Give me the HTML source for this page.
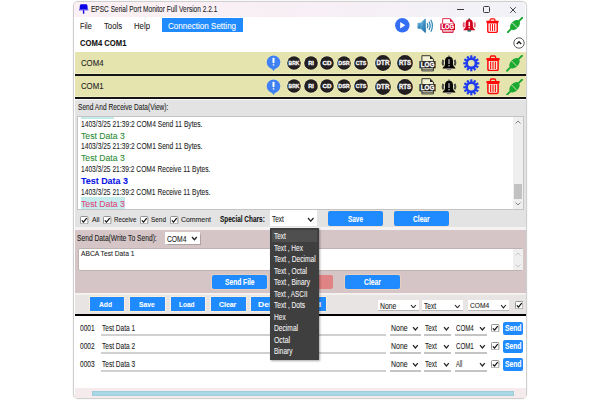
<!DOCTYPE html>
<html><head><meta charset="utf-8"><style>
html,body{margin:0;padding:0;background:#fff;}
body{width:600px;height:400px;position:relative;overflow:hidden;font-family:"Liberation Sans",sans-serif;}
.a{position:absolute;}
.t{line-height:1;white-space:nowrap;transform-origin:0 0;-webkit-text-stroke:0.08px currentColor;}
svg text{font-family:"Liberation Sans",sans-serif;}
</style></head><body>
<div class="a" style="left:72.8px;top:0.6px;width:454px;height:398.6px;border:1.6px solid #cfcfcf;border-radius:5px;background:#fff;box-shadow:0 0 1.5px rgba(0,0,0,.12);box-sizing:border-box;overflow:hidden"></div>
<div class="a" style="left:74.4px;top:2.2px;width:450.8px;height:15px;background:linear-gradient(90deg,#fbf0f3,#f8eff5 45%,#f1f2f7);border-radius:4px 4px 0 0"></div>
<svg class="a" style="left:78px;top:3px" width="12" height="12" viewBox="0 0 12 12">
<path d="M3 1.3 H8.3 Q9.3 1.3 9.5 3 L9.7 6.2 H1.6 L1.8 3 Q2 1.3 3 1.3 Z" fill="#0c00e6"/>
<rect x="1" y="6.3" width="9.3" height="1" fill="#2a20f0"/>
<rect x="4.9" y="7.3" width="1.4" height="3.5" rx="0.5" fill="#0c00e6"/>
</svg>
<div class="a t" style="left:91px;top:5.34px;font-size:9.04px;color:#1a1a1a;transform:scaleX(0.725);">EPSC Serial Port Monitor Full Version 2.2.1</div>
<div class="a" style="left:457px;top:8.6px;width:6.5px;height:0.9px;background:#3a3a3a"></div>
<div class="a" style="left:483px;top:6.3px;width:6.6px;height:6.4px;border:0.95px solid #3a3a3a;border-radius:1.5px;box-sizing:border-box"></div>
<svg class="a" style="left:509px;top:5.5px" width="8" height="8" viewBox="0 0 8 8"><path d="M1.2 1.2L6.8 6.8M6.8 1.2L1.2 6.8" stroke="#3a3a3a" stroke-width="0.95"/></svg>
<div class="a t" style="left:80.3px;top:22.00px;font-size:8.74px;color:#222;transform:scaleX(0.831);">File</div>
<div class="a t" style="left:104px;top:22.00px;font-size:8.74px;color:#222;transform:scaleX(0.882);">Tools</div>
<div class="a t" style="left:133.6px;top:22.00px;font-size:8.74px;color:#222;transform:scaleX(0.890);">Help</div>
<div class="a" style="left:162px;top:18.3px;width:80.8px;height:14.2px;background:#1f8bff"></div>
<div class="a t" style="left:167.5px;top:22.17px;font-size:8.89px;color:#fff;transform:scaleX(0.908);">Connection Setting</div>
<svg class="a" style="left:395.2px;top:18.3px" width="15" height="15" viewBox="0 0 15 15"><circle cx="7.3" cy="7.3" r="7.2" fill="#336ef4"/><path d="M5.2 4 L10.3 7.2 L5.2 10.4 Z" fill="#fff"/></svg>
<svg class="a" style="left:417px;top:17.8px" width="17" height="15.5" viewBox="0 0 17 15.5">
<defs><linearGradient id="sg" x1="0" y1="0" x2="1" y2="1"><stop offset="0" stop-color="#8cc6e6"/><stop offset="0.5" stop-color="#3d93c6"/><stop offset="1" stop-color="#1a6497"/></linearGradient></defs>
<rect x="0.4" y="4.8" width="3.8" height="5.9" rx="0.8" fill="url(#sg)"/>
<path d="M3.4 5 L8 0.8 Q8.8 0.3 8.8 1.3 V14.2 Q8.8 15.2 8 14.7 L3.4 10.5 Z" fill="url(#sg)"/>
<path d="M10.2 5.3 Q11.5 7.75 10.2 10.2" stroke="#2f86bb" stroke-width="1.3" fill="none"/>
<path d="M12 3.5 Q14.3 7.75 12 12" stroke="#2f86bb" stroke-width="1.2" fill="none"/>
<path d="M13.8 1.8 Q17 7.75 13.8 13.7" stroke="#2f86bb" stroke-width="1.2" fill="none"/>
</svg>
<svg class="a" style="left:439.8px;top:17.6px" width="15.5" height="15.5" viewBox="0 0 17 17">
<path d="M2.9 0.7 H11 L14.4 4 V15.9 H2.9 Z" fill="#fff" stroke="#d4002a" stroke-width="0.9"/>
<path d="M11 0.7 L14.4 4 H11 Z" fill="#d4002a"/>
<path d="M2.9 14.5 H14.4" stroke="#d4002a" stroke-width="0.6"/>
<rect x="0.4" y="6.1" width="16.2" height="7.2" fill="#d4002a"/>
<text x="8.5" y="12.4" font-weight="bold" font-size="6.9" fill="#fff" stroke="#fff" stroke-width="0.3" text-anchor="middle" textLength="13.6" lengthAdjust="spacingAndGlyphs">LOG</text>
</svg>
<svg class="a" style="left:462.3px;top:18.3px" width="14.5" height="14.5" viewBox="0 0 16 16">
<circle cx="8" cy="1.3" r="1.1" fill="#2f6f68"/>
<path d="M8 1.7 C4.6 1.7 4 3.9 4 6.6 V9.3 C4 10.9 2.7 11.8 1.6 12.9 V13.4 H14.4 V12.9 C13.3 11.8 12 10.9 12 9.3 V6.6 C12 3.9 11.4 1.7 8 1.7 Z" fill="#d2001c"/>
<ellipse cx="8" cy="14.2" rx="2.3" ry="1.1" fill="#2f6f68"/>
<rect x="7.2" y="4.2" width="1.6" height="4.8" fill="#fff"/><rect x="7.2" y="10" width="1.6" height="1.4" fill="#fff"/>
<path d="M2.3 4.9 Q1.2 7.6 2.3 10.3 M13.7 4.9 Q14.8 7.6 13.7 10.3" stroke="#e6687a" stroke-width="2.1" fill="none"/>
</svg>
<svg class="a" style="left:485.8px;top:17.9px" width="13" height="15.3" viewBox="0 0 14 16">
<path d="M4.4 3 V1.7 Q4.4 0.7 5.4 0.7 H8.6 Q9.6 0.7 9.6 1.7 V3" stroke="#ff0a0a" stroke-width="1.3" fill="none"/>
<rect x="0.3" y="2.8" width="13.4" height="2.1" rx="0.7" fill="#ff0a0a"/>
<path d="M1.9 4.9 H12.1 V13.8 Q12.1 15.3 10.6 15.3 H3.4 Q1.9 15.3 1.9 13.8 Z" stroke="#ff0a0a" stroke-width="1.5" fill="#fff"/>
<rect x="4.1" y="6.3" width="1.1" height="7.4" fill="#ff0a0a"/><rect x="6.45" y="6.3" width="1.1" height="7.4" fill="#ff0a0a"/><rect x="8.8" y="6.3" width="1.1" height="7.4" fill="#ff0a0a"/>
</svg>
<svg class="a" style="left:506.8px;top:17.4px" width="16" height="16" viewBox="0 0 17 17">
<path d="M0.8 16.2 L4.6 12.4 M12.4 4.6 L16.2 0.8" stroke="#1aaa32" stroke-width="1.9" stroke-linecap="round"/>
<ellipse cx="8.5" cy="8.5" rx="6.3" ry="4.1" transform="rotate(-45 8.5 8.5)" fill="#1aaa32"/>
<path d="M5.6 6.2 L10.8 11.4" stroke="#fff" stroke-width="0.9"/>
</svg>
<div class="a t" style="left:80.3px;top:38.33px;font-size:9.65px;color:#111;font-weight:bold;transform:scaleX(0.798);">COM4 COM1</div>
<svg class="a" style="left:513.1px;top:37px" width="12" height="12" viewBox="0 0 12 12"><circle cx="6" cy="6" r="5.2" stroke="#4a4a4a" stroke-width="0.9" fill="#fff"/><path d="M3.8 7 L6 4.8 L8.2 7" stroke="#222" stroke-width="1.4" fill="none"/></svg>
<div class="a" style="left:74.5px;top:52px;width:451px;height:22.2px;background:#e5e3ae"></div>
<div class="a" style="left:74.5px;top:73.2px;width:451px;height:1px;background:#efedc4"></div>
<div class="a" style="left:74.5px;top:74.2px;width:451px;height:1.7px;background:#141414"></div>
<div class="a t" style="left:80.8px;top:58.94px;font-size:9.04px;color:#222;transform:scaleX(0.861);">COM4</div>
<svg class="a" style="left:265.6px;top:55.2px" width="15" height="17" viewBox="0 0 15 17">
<circle cx="7.5" cy="7.2" r="7.4" fill="#f2efc0" opacity="0.6"/>
<circle cx="7.5" cy="7.2" r="6.8" fill="#3f80f2"/><path d="M5 12.5 L7.5 15.9 L10 12.5Z" fill="#3f80f2"/>
<rect x="6.5" y="2.8" width="2" height="5.5" rx="0.7" fill="#fff"/><rect x="6.6" y="9.2" width="1.8" height="1.4" rx="0.5" fill="#fff"/></svg>
<svg class="a" style="left:285.8px;top:54.6px" width="16" height="16" viewBox="0 0 16 16"><circle cx="8" cy="8" r="7.6" fill="#f4f1c4"/><circle cx="8" cy="8" r="6.8" fill="#231f20"/>
<text x="8" y="10.1" font-weight="bold" font-size="5.9" fill="#f4f4f4" stroke="#f4f4f4" stroke-width="0.35" text-anchor="middle" textLength="10.8" lengthAdjust="spacingAndGlyphs">BRK</text></svg>
<svg class="a" style="left:302.6px;top:54.6px" width="16" height="16" viewBox="0 0 16 16"><circle cx="8" cy="8" r="7.6" fill="#f4f1c4"/><circle cx="8" cy="8" r="6.8" fill="#231f20"/>
<text x="8" y="10.1" font-weight="bold" font-size="5.9" fill="#f4f4f4" stroke="#f4f4f4" stroke-width="0.35" text-anchor="middle" textLength="5.6" lengthAdjust="spacingAndGlyphs">RI</text></svg>
<svg class="a" style="left:319.3px;top:54.6px" width="16" height="16" viewBox="0 0 16 16"><circle cx="8" cy="8" r="7.6" fill="#f4f1c4"/><circle cx="8" cy="8" r="6.8" fill="#231f20"/>
<text x="8" y="10.1" font-weight="bold" font-size="5.9" fill="#f4f4f4" stroke="#f4f4f4" stroke-width="0.35" text-anchor="middle" textLength="9" lengthAdjust="spacingAndGlyphs">CD</text></svg>
<svg class="a" style="left:335.9px;top:54.6px" width="16" height="16" viewBox="0 0 16 16"><circle cx="8" cy="8" r="7.6" fill="#f4f1c4"/><circle cx="8" cy="8" r="6.8" fill="#231f20"/>
<text x="8" y="10.1" font-weight="bold" font-size="5.9" fill="#f4f4f4" stroke="#f4f4f4" stroke-width="0.35" text-anchor="middle" textLength="11.4" lengthAdjust="spacingAndGlyphs">DSR</text></svg>
<svg class="a" style="left:352.6px;top:54.6px" width="16" height="16" viewBox="0 0 16 16"><circle cx="8" cy="8" r="7.6" fill="#f4f1c4"/><circle cx="8" cy="8" r="6.8" fill="#231f20"/>
<text x="8" y="10.1" font-weight="bold" font-size="5.9" fill="#f4f4f4" stroke="#f4f4f4" stroke-width="0.35" text-anchor="middle" textLength="10.6" lengthAdjust="spacingAndGlyphs">CTS</text></svg>
<svg class="a" style="left:374.3px;top:54.0px" width="18" height="18" viewBox="0 0 18 18"><circle cx="9" cy="9" r="8.6" fill="#f4f1c4"/><circle cx="9" cy="9" r="7.9" fill="#231f20"/>
<text x="9" y="11.1" font-weight="bold" font-size="6.9" fill="#f4f4f4" stroke="#f4f4f4" stroke-width="0.4" text-anchor="middle" textLength="12.8" lengthAdjust="spacingAndGlyphs">DTR</text></svg>
<svg class="a" style="left:396.1px;top:54.0px" width="18" height="18" viewBox="0 0 18 18"><circle cx="9" cy="9" r="8.6" fill="#f4f1c4"/><circle cx="9" cy="9" r="7.9" fill="#231f20"/>
<text x="9" y="11.1" font-weight="bold" font-size="6.9" fill="#f4f4f4" stroke="#f4f4f4" stroke-width="0.4" text-anchor="middle" textLength="12.2" lengthAdjust="spacingAndGlyphs">RTS</text></svg>
<svg class="a" style="left:418.5px;top:54.5px" width="17" height="17" viewBox="0 0 17 17">
<path d="M2.9 0.7 H11 L14.4 4 V15.9 H2.9 Z" fill="#f1f0d2" stroke="#222" stroke-width="0.9"/>
<path d="M11 0.7 L14.4 4 H11 Z" fill="#222"/>
<path d="M2.9 14.5 H14.4" stroke="#222" stroke-width="0.6"/>
<rect x="0.4" y="6.1" width="16.2" height="7.2" fill="#222"/>
<text x="8.5" y="12.4" font-weight="bold" font-size="6.9" fill="#fff" stroke="#fff" stroke-width="0.3" text-anchor="middle" textLength="13.6" lengthAdjust="spacingAndGlyphs">LOG</text>
</svg>
<svg class="a" style="left:441px;top:55.0px" width="16" height="16" viewBox="0 0 16 16">
<circle cx="8" cy="1.3" r="1.1" fill="#888"/>
<path d="M8 1.7 C4.6 1.7 4 3.9 4 6.6 V9.3 C4 10.9 2.7 11.8 1.6 12.9 V13.4 H14.4 V12.9 C13.3 11.8 12 10.9 12 9.3 V6.6 C12 3.9 11.4 1.7 8 1.7 Z" fill="#050505"/>
<ellipse cx="8" cy="14.2" rx="2.3" ry="1.1" fill="#888"/>
<rect x="7.2" y="4.2" width="1.6" height="4.8" fill="#9a9a9a"/><rect x="7.2" y="10" width="1.6" height="1.4" fill="#9a9a9a"/>
<path d="M2.3 4.9 Q1.2 7.6 2.3 10.3 M13.7 4.9 Q14.8 7.6 13.7 10.3" stroke="#4a4a4a" stroke-width="2.1" fill="none"/>
</svg>
<svg class="a" style="left:462.5px;top:55.0px" width="17" height="17" viewBox="0 0 17 17">
<g fill="#1f3cf0" transform="translate(8.3 8.3)"><rect x="-1.1" y="-8" width="2.2" height="3.4" transform="rotate(0)"/><rect x="-1.1" y="-8" width="2.2" height="3.4" transform="rotate(30)"/><rect x="-1.1" y="-8" width="2.2" height="3.4" transform="rotate(60)"/><rect x="-1.1" y="-8" width="2.2" height="3.4" transform="rotate(90)"/><rect x="-1.1" y="-8" width="2.2" height="3.4" transform="rotate(120)"/><rect x="-1.1" y="-8" width="2.2" height="3.4" transform="rotate(150)"/><rect x="-1.1" y="-8" width="2.2" height="3.4" transform="rotate(180)"/><rect x="-1.1" y="-8" width="2.2" height="3.4" transform="rotate(210)"/><rect x="-1.1" y="-8" width="2.2" height="3.4" transform="rotate(240)"/><rect x="-1.1" y="-8" width="2.2" height="3.4" transform="rotate(270)"/><rect x="-1.1" y="-8" width="2.2" height="3.4" transform="rotate(300)"/><rect x="-1.1" y="-8" width="2.2" height="3.4" transform="rotate(330)"/>
<circle r="4.6" fill="none" stroke="#1f3cf0" stroke-width="2.6"/></g></svg>
<svg class="a" style="left:485.8px;top:54.6px" width="14" height="16.6" viewBox="0 0 14 16">
<path d="M4.4 3 V1.7 Q4.4 0.7 5.4 0.7 H8.6 Q9.6 0.7 9.6 1.7 V3" stroke="#ff0a0a" stroke-width="1.3" fill="none"/>
<rect x="0.3" y="2.8" width="13.4" height="2.1" rx="0.7" fill="#ff0a0a"/>
<path d="M1.9 4.9 H12.1 V13.8 Q12.1 15.3 10.6 15.3 H3.4 Q1.9 15.3 1.9 13.8 Z" stroke="#ff0a0a" stroke-width="1.5" fill="#f4ecd6"/>
<rect x="4.1" y="6.3" width="1.1" height="7.4" fill="#ff0a0a"/><rect x="6.45" y="6.3" width="1.1" height="7.4" fill="#ff0a0a"/><rect x="8.8" y="6.3" width="1.1" height="7.4" fill="#ff0a0a"/>
</svg>
<svg class="a" style="left:505.8px;top:55.0px" width="17" height="16.5" viewBox="0 0 17 17">
<path d="M0.8 16.2 L4.6 12.4 M12.4 4.6 L16.2 0.8" stroke="#1aaa32" stroke-width="1.9" stroke-linecap="round"/>
<ellipse cx="8.5" cy="8.5" rx="6.3" ry="4.1" transform="rotate(-45 8.5 8.5)" fill="#1aaa32"/>
<path d="M5.6 6.2 L10.8 11.4" stroke="#e5e3ae" stroke-width="0.9"/>
</svg>
<div class="a" style="left:74.5px;top:75.8px;width:451px;height:21.5px;background:#e5e3ae"></div>
<div class="a" style="left:74.5px;top:96.3px;width:451px;height:1px;background:#efedc4"></div>
<div class="a" style="left:74.5px;top:97.3px;width:451px;height:1.7px;background:#141414"></div>
<div class="a t" style="left:80.8px;top:82.44px;font-size:9.04px;color:#222;transform:scaleX(0.861);">COM1</div>
<svg class="a" style="left:265.6px;top:78.7px" width="15" height="17" viewBox="0 0 15 17">
<circle cx="7.5" cy="7.2" r="7.4" fill="#f2efc0" opacity="0.6"/>
<circle cx="7.5" cy="7.2" r="6.8" fill="#3f80f2"/><path d="M5 12.5 L7.5 15.9 L10 12.5Z" fill="#3f80f2"/>
<rect x="6.5" y="2.8" width="2" height="5.5" rx="0.7" fill="#fff"/><rect x="6.6" y="9.2" width="1.8" height="1.4" rx="0.5" fill="#fff"/></svg>
<svg class="a" style="left:285.8px;top:78.1px" width="16" height="16" viewBox="0 0 16 16"><circle cx="8" cy="8" r="7.6" fill="#f4f1c4"/><circle cx="8" cy="8" r="6.8" fill="#231f20"/>
<text x="8" y="10.1" font-weight="bold" font-size="5.9" fill="#f4f4f4" stroke="#f4f4f4" stroke-width="0.35" text-anchor="middle" textLength="10.8" lengthAdjust="spacingAndGlyphs">BRK</text></svg>
<svg class="a" style="left:302.6px;top:78.1px" width="16" height="16" viewBox="0 0 16 16"><circle cx="8" cy="8" r="7.6" fill="#f4f1c4"/><circle cx="8" cy="8" r="6.8" fill="#231f20"/>
<text x="8" y="10.1" font-weight="bold" font-size="5.9" fill="#f4f4f4" stroke="#f4f4f4" stroke-width="0.35" text-anchor="middle" textLength="5.6" lengthAdjust="spacingAndGlyphs">RI</text></svg>
<svg class="a" style="left:319.3px;top:78.1px" width="16" height="16" viewBox="0 0 16 16"><circle cx="8" cy="8" r="7.6" fill="#f4f1c4"/><circle cx="8" cy="8" r="6.8" fill="#231f20"/>
<text x="8" y="10.1" font-weight="bold" font-size="5.9" fill="#f4f4f4" stroke="#f4f4f4" stroke-width="0.35" text-anchor="middle" textLength="9" lengthAdjust="spacingAndGlyphs">CD</text></svg>
<svg class="a" style="left:335.9px;top:78.1px" width="16" height="16" viewBox="0 0 16 16"><circle cx="8" cy="8" r="7.6" fill="#f4f1c4"/><circle cx="8" cy="8" r="6.8" fill="#231f20"/>
<text x="8" y="10.1" font-weight="bold" font-size="5.9" fill="#f4f4f4" stroke="#f4f4f4" stroke-width="0.35" text-anchor="middle" textLength="11.4" lengthAdjust="spacingAndGlyphs">DSR</text></svg>
<svg class="a" style="left:352.6px;top:78.1px" width="16" height="16" viewBox="0 0 16 16"><circle cx="8" cy="8" r="7.6" fill="#f4f1c4"/><circle cx="8" cy="8" r="6.8" fill="#231f20"/>
<text x="8" y="10.1" font-weight="bold" font-size="5.9" fill="#f4f4f4" stroke="#f4f4f4" stroke-width="0.35" text-anchor="middle" textLength="10.6" lengthAdjust="spacingAndGlyphs">CTS</text></svg>
<svg class="a" style="left:374.3px;top:77.5px" width="18" height="18" viewBox="0 0 18 18"><circle cx="9" cy="9" r="8.6" fill="#f4f1c4"/><circle cx="9" cy="9" r="7.9" fill="#231f20"/>
<text x="9" y="11.1" font-weight="bold" font-size="6.9" fill="#f4f4f4" stroke="#f4f4f4" stroke-width="0.4" text-anchor="middle" textLength="12.8" lengthAdjust="spacingAndGlyphs">DTR</text></svg>
<svg class="a" style="left:396.1px;top:77.5px" width="18" height="18" viewBox="0 0 18 18"><circle cx="9" cy="9" r="8.6" fill="#f4f1c4"/><circle cx="9" cy="9" r="7.9" fill="#231f20"/>
<text x="9" y="11.1" font-weight="bold" font-size="6.9" fill="#f4f4f4" stroke="#f4f4f4" stroke-width="0.4" text-anchor="middle" textLength="12.2" lengthAdjust="spacingAndGlyphs">RTS</text></svg>
<svg class="a" style="left:418.5px;top:78px" width="17" height="17" viewBox="0 0 17 17">
<path d="M2.9 0.7 H11 L14.4 4 V15.9 H2.9 Z" fill="#f1f0d2" stroke="#222" stroke-width="0.9"/>
<path d="M11 0.7 L14.4 4 H11 Z" fill="#222"/>
<path d="M2.9 14.5 H14.4" stroke="#222" stroke-width="0.6"/>
<rect x="0.4" y="6.1" width="16.2" height="7.2" fill="#222"/>
<text x="8.5" y="12.4" font-weight="bold" font-size="6.9" fill="#fff" stroke="#fff" stroke-width="0.3" text-anchor="middle" textLength="13.6" lengthAdjust="spacingAndGlyphs">LOG</text>
</svg>
<svg class="a" style="left:441px;top:78.5px" width="16" height="16" viewBox="0 0 16 16">
<circle cx="8" cy="1.3" r="1.1" fill="#888"/>
<path d="M8 1.7 C4.6 1.7 4 3.9 4 6.6 V9.3 C4 10.9 2.7 11.8 1.6 12.9 V13.4 H14.4 V12.9 C13.3 11.8 12 10.9 12 9.3 V6.6 C12 3.9 11.4 1.7 8 1.7 Z" fill="#050505"/>
<ellipse cx="8" cy="14.2" rx="2.3" ry="1.1" fill="#888"/>
<rect x="7.2" y="4.2" width="1.6" height="4.8" fill="#9a9a9a"/><rect x="7.2" y="10" width="1.6" height="1.4" fill="#9a9a9a"/>
<path d="M2.3 4.9 Q1.2 7.6 2.3 10.3 M13.7 4.9 Q14.8 7.6 13.7 10.3" stroke="#4a4a4a" stroke-width="2.1" fill="none"/>
</svg>
<svg class="a" style="left:462.5px;top:78.5px" width="17" height="17" viewBox="0 0 17 17">
<g fill="#1f3cf0" transform="translate(8.3 8.3)"><rect x="-1.1" y="-8" width="2.2" height="3.4" transform="rotate(0)"/><rect x="-1.1" y="-8" width="2.2" height="3.4" transform="rotate(30)"/><rect x="-1.1" y="-8" width="2.2" height="3.4" transform="rotate(60)"/><rect x="-1.1" y="-8" width="2.2" height="3.4" transform="rotate(90)"/><rect x="-1.1" y="-8" width="2.2" height="3.4" transform="rotate(120)"/><rect x="-1.1" y="-8" width="2.2" height="3.4" transform="rotate(150)"/><rect x="-1.1" y="-8" width="2.2" height="3.4" transform="rotate(180)"/><rect x="-1.1" y="-8" width="2.2" height="3.4" transform="rotate(210)"/><rect x="-1.1" y="-8" width="2.2" height="3.4" transform="rotate(240)"/><rect x="-1.1" y="-8" width="2.2" height="3.4" transform="rotate(270)"/><rect x="-1.1" y="-8" width="2.2" height="3.4" transform="rotate(300)"/><rect x="-1.1" y="-8" width="2.2" height="3.4" transform="rotate(330)"/>
<circle r="4.6" fill="none" stroke="#1f3cf0" stroke-width="2.6"/></g></svg>
<svg class="a" style="left:485.8px;top:78.1px" width="14" height="16.6" viewBox="0 0 14 16">
<path d="M4.4 3 V1.7 Q4.4 0.7 5.4 0.7 H8.6 Q9.6 0.7 9.6 1.7 V3" stroke="#ff0a0a" stroke-width="1.3" fill="none"/>
<rect x="0.3" y="2.8" width="13.4" height="2.1" rx="0.7" fill="#ff0a0a"/>
<path d="M1.9 4.9 H12.1 V13.8 Q12.1 15.3 10.6 15.3 H3.4 Q1.9 15.3 1.9 13.8 Z" stroke="#ff0a0a" stroke-width="1.5" fill="#f4ecd6"/>
<rect x="4.1" y="6.3" width="1.1" height="7.4" fill="#ff0a0a"/><rect x="6.45" y="6.3" width="1.1" height="7.4" fill="#ff0a0a"/><rect x="8.8" y="6.3" width="1.1" height="7.4" fill="#ff0a0a"/>
</svg>
<svg class="a" style="left:505.8px;top:78.5px" width="17" height="16.5" viewBox="0 0 17 17">
<path d="M0.8 16.2 L4.6 12.4 M12.4 4.6 L16.2 0.8" stroke="#1aaa32" stroke-width="1.9" stroke-linecap="round"/>
<ellipse cx="8.5" cy="8.5" rx="6.3" ry="4.1" transform="rotate(-45 8.5 8.5)" fill="#1aaa32"/>
<path d="M5.6 6.2 L10.8 11.4" stroke="#e5e3ae" stroke-width="0.9"/>
</svg>
<div class="a" style="left:74.5px;top:98.7px;width:451px;height:1.3px;background:#fafafa"></div>
<div class="a" style="left:74.5px;top:100px;width:451px;height:127px;background:#e3e3e3"></div>
<div class="a" style="left:74.5px;top:227px;width:451px;height:2.5px;background:#f4f2f2"></div>
<div class="a t" style="left:77.5px;top:102.98px;font-size:8.29px;color:#222;transform:scaleX(0.796);">Send And Receive Data(View):</div>
<div class="a" style="left:77px;top:116px;width:446.5px;height:93.5px;background:#fff;border:1px solid #c4c4c4;box-sizing:border-box"></div>
<div class="a" style="left:80.8px;top:117px;width:33.2px;height:2px;background:#c2ebea"></div>
<div class="a" style="left:513px;top:117px;width:9.5px;height:91.5px;background:#efefef"></div>
<div class="a" style="left:513.5px;top:184px;width:8.5px;height:15px;background:#c2c2c2"></div>
<svg class="a" style="left:514px;top:119px" width="8" height="6" viewBox="0 0 8 6"><path d="M1.5 4.5 L4 2 L6.5 4.5" stroke="#777" stroke-width="0.9" fill="none"/></svg>
<svg class="a" style="left:514px;top:201px" width="8" height="6" viewBox="0 0 8 6"><path d="M1.5 1.5 L4 4 L6.5 1.5" stroke="#777" stroke-width="0.9" fill="none"/></svg>
<div class="a" style="left:80.8px;top:197px;width:44.6px;height:11.8px;background:#c4ecec"></div>
<div class="a t" style="left:81px;top:120.40px;font-size:8.74px;color:#222;transform:scaleX(0.763);">1403/3/25 21:39:2 COM4 Send 11 Bytes.</div>
<div class="a t" style="left:81px;top:142.40px;font-size:8.74px;color:#222;transform:scaleX(0.763);">1403/3/25 21:39:2 COM1 Send 11 Bytes.</div>
<div class="a t" style="left:81px;top:165.20px;font-size:8.74px;color:#222;transform:scaleX(0.760);">1403/3/25 21:39:2 COM4 Receive 11 Bytes.</div>
<div class="a t" style="left:81px;top:187.80px;font-size:8.74px;color:#222;transform:scaleX(0.760);">1403/3/25 21:39:2 COM1 Receive 11 Bytes.</div>
<div class="a t" style="left:81px;top:130.99px;font-size:9.70px;color:#2a8c32;transform:scaleX(0.892);">Test Data 3</div>
<div class="a t" style="left:81px;top:153.49px;font-size:9.70px;color:#2a8c32;transform:scaleX(0.892);">Test Data 3</div>
<div class="a t" style="left:81px;top:177.13px;font-size:9.30px;color:#0a14e6;font-weight:bold;transform:scaleX(0.958);">Test Data 3</div>
<div class="a t" style="left:81px;top:199.09px;font-size:9.70px;color:#e0457e;transform:scaleX(0.895);">Test Data 3</div>
<svg class="a" style="left:80.3px;top:215.8px" width="8.4" height="8.4" viewBox="0 0 10 10"><rect x="0.6" y="0.6" width="8.8" height="8.8" rx="1.2" fill="#fff" stroke="#8a8a8a" stroke-width="1.1"/><path d="M2.2 5.2 L4.2 7.3 L8 2.6" stroke="#111" stroke-width="1.5" fill="none"/></svg>
<div class="a t" style="left:91.5px;top:216.24px;font-size:7.99px;color:#222;transform:scaleX(0.856);">All</div>
<svg class="a" style="left:103.2px;top:215.8px" width="8.4" height="8.4" viewBox="0 0 10 10"><rect x="0.6" y="0.6" width="8.8" height="8.8" rx="1.2" fill="#fff" stroke="#8a8a8a" stroke-width="1.1"/><path d="M2.2 5.2 L4.2 7.3 L8 2.6" stroke="#111" stroke-width="1.5" fill="none"/></svg>
<div class="a t" style="left:113.8px;top:216.24px;font-size:7.99px;color:#222;transform:scaleX(0.776);">Receive</div>
<svg class="a" style="left:140.2px;top:215.8px" width="8.4" height="8.4" viewBox="0 0 10 10"><rect x="0.6" y="0.6" width="8.8" height="8.8" rx="1.2" fill="#fff" stroke="#8a8a8a" stroke-width="1.1"/><path d="M2.2 5.2 L4.2 7.3 L8 2.6" stroke="#111" stroke-width="1.5" fill="none"/></svg>
<div class="a t" style="left:151px;top:216.24px;font-size:7.99px;color:#222;transform:scaleX(0.804);">Send</div>
<svg class="a" style="left:170.2px;top:215.8px" width="8.4" height="8.4" viewBox="0 0 10 10"><rect x="0.6" y="0.6" width="8.8" height="8.8" rx="1.2" fill="#fff" stroke="#8a8a8a" stroke-width="1.1"/><path d="M2.2 5.2 L4.2 7.3 L8 2.6" stroke="#111" stroke-width="1.5" fill="none"/></svg>
<div class="a t" style="left:180.7px;top:216.24px;font-size:7.99px;color:#222;transform:scaleX(0.866);">Comment</div>
<div class="a t" style="left:219.7px;top:214.52px;font-size:9.19px;color:#111;font-weight:bold;transform:scaleX(0.703);">Special Chars:</div>
<div class="a" style="left:270px;top:210.2px;width:46.5px;height:16px;background:#fff"></div>
<div class="a t" style="left:272px;top:215.28px;font-size:8.29px;color:#222;transform:scaleX(0.783);">Text</div>
<svg class="a" style="left:306.7px;top:217.3px" width="7.5" height="5.2" viewBox="0 0 7.5 5.2"><path d="M1 1 L3.75 4.2 L6.5 1" stroke="#222" stroke-width="1.2" fill="none"/></svg>
<div class="a" style="left:327.5px;top:211px;width:55.5px;height:14.5px;background:#1f8bff;border-radius:2px;box-shadow:0 0 0 1px #f2e0d0"></div>
<div class="a t" style="left:347.5px;top:214.93px;font-size:8.59px;color:#fff;font-weight:bold;transform:scaleX(0.748);">Save</div>
<div class="a" style="left:393.8px;top:211px;width:55.5px;height:14.5px;background:#1f8bff;border-radius:2px;box-shadow:0 0 0 1px #f2e0d0"></div>
<div class="a t" style="left:413px;top:214.93px;font-size:8.59px;color:#fff;font-weight:bold;transform:scaleX(0.777);">Clear</div>
<div class="a" style="left:74.5px;top:229.5px;width:451px;height:63.5px;background:#d5c5c6"></div>
<div class="a" style="left:74.5px;top:293px;width:451px;height:1.5px;background:#f6f1f1"></div>
<div class="a t" style="left:77.2px;top:233.98px;font-size:8.29px;color:#222;transform:scaleX(0.808);">Send Data(Write To Send):</div>
<div class="a" style="left:165px;top:232.2px;width:35px;height:11.8px;background:#fff;box-shadow:0.5px 0.8px 1px rgba(0,0,0,.18)"></div>
<div class="a t" style="left:167px;top:234.98px;font-size:8.29px;color:#222;transform:scaleX(0.814);">COM4</div>
<svg class="a" style="left:191px;top:236.2px" width="6.8" height="4.8" viewBox="0 0 6.8 4.8"><path d="M1 1 L3.4 3.8 L5.8 1" stroke="#222" stroke-width="1.3" fill="none"/></svg>
<div class="a" style="left:77.5px;top:247.5px;width:445.5px;height:23px;background:#fff;border-radius:2px;border:1px solid #bdb3b3;box-sizing:border-box"></div>
<div class="a t" style="left:80.5px;top:249.66px;font-size:7.84px;color:#222;transform:scaleX(0.855);">ABCA Test Data 1</div>
<div class="a" style="left:513px;top:248.5px;width:9.5px;height:21px;background:#efefef"></div>
<svg class="a" style="left:514px;top:251px" width="8" height="6" viewBox="0 0 8 6"><path d="M1.5 4.5 L4 2 L6.5 4.5" stroke="#bbb" stroke-width="0.8" fill="none"/></svg>
<svg class="a" style="left:514px;top:262.5px" width="8" height="6" viewBox="0 0 8 6"><path d="M1.5 1.5 L4 4 L6.5 1.5" stroke="#bbb" stroke-width="0.8" fill="none"/></svg>
<div class="a" style="left:212.3px;top:274.9px;width:55px;height:14.4px;background:#1f8bff;border-radius:2px;box-shadow:0 0 0 1px #e6cfc0"></div>
<div class="a t" style="left:225px;top:278.38px;font-size:8.29px;color:#fff;font-weight:bold;transform:scaleX(0.803);">Send File</div>
<div class="a" style="left:278px;top:275px;width:55.3px;height:14.3px;background:#e08384;border-radius:2px;"></div>
<div class="a" style="left:345px;top:275px;width:54.5px;height:14.3px;background:#1f8bff;border-radius:2px;box-shadow:0 0 0 1px #e6cfc0"></div>
<div class="a t" style="left:364px;top:278.40px;font-size:8.74px;color:#fff;font-weight:bold;transform:scaleX(0.777);">Clear</div>
<div class="a" style="left:74.5px;top:294.5px;width:451px;height:19.5px;background:#e9e4e4"></div>
<div class="a" style="left:74.5px;top:314px;width:451px;height:2px;background:#000"></div>
<div class="a" style="left:89.8px;top:296.8px;width:34.5px;height:14.2px;background:#1f8bff;border-radius:0px;box-shadow:0 0 0 1px #fbeedd"></div>
<div class="a t" style="left:98.9px;top:300.99px;font-size:7.69px;color:#fff;font-weight:bold;transform:scaleX(0.870);">Add</div>
<div class="a" style="left:130.1px;top:296.8px;width:34.5px;height:14.2px;background:#1f8bff;border-radius:0px;box-shadow:0 0 0 1px #fbeedd"></div>
<div class="a t" style="left:138.9px;top:300.99px;font-size:7.69px;color:#fff;font-weight:bold;transform:scaleX(0.874);">Save</div>
<div class="a" style="left:170.7px;top:296.8px;width:34.5px;height:14.2px;background:#1f8bff;border-radius:0px;box-shadow:0 0 0 1px #fbeedd"></div>
<div class="a t" style="left:179.2px;top:300.99px;font-size:7.69px;color:#fff;font-weight:bold;transform:scaleX(0.844);">Load</div>
<div class="a" style="left:211.2px;top:296.8px;width:34.5px;height:14.2px;background:#1f8bff;border-radius:0px;box-shadow:0 0 0 1px #fbeedd"></div>
<div class="a t" style="left:219.2px;top:300.99px;font-size:7.69px;color:#fff;font-weight:bold;transform:scaleX(0.900);">Clear</div>
<div class="a" style="left:251.3px;top:296.8px;width:74.7px;height:14.2px;background:#1f8bff;border-radius:0px;box-shadow:0 0 0 1px #fbeedd"></div>
<div class="a t" style="left:258.3px;top:301.12px;font-size:7.54px;color:#fff;font-weight:bold;transform:scaleX(1.134);">Delete Selected</div>
<div class="a" style="left:378.3px;top:299.5px;width:41px;height:11.8px;background:#fff"></div>
<div class="a" style="left:378.3px;top:310.3px;width:41px;height:1.2px;background:#b8b8b8"></div>
<div class="a t" style="left:380.3px;top:301.67px;font-size:8.89px;color:#222;transform:scaleX(0.771);">None</div>
<svg class="a" style="left:410.3px;top:303.6px" width="6.8" height="4.8" viewBox="0 0 6.8 4.8"><path d="M1 1 L3.4 3.8 L5.8 1" stroke="#222" stroke-width="1.1" fill="none"/></svg>
<div class="a" style="left:421.7px;top:299.5px;width:41px;height:11.8px;background:#fff"></div>
<div class="a" style="left:421.7px;top:310.3px;width:41px;height:1.2px;background:#b8b8b8"></div>
<div class="a t" style="left:423.7px;top:301.67px;font-size:8.89px;color:#222;transform:scaleX(0.742);">Text</div>
<svg class="a" style="left:453.5px;top:303.6px" width="6.8" height="4.8" viewBox="0 0 6.8 4.8"><path d="M1 1 L3.4 3.8 L5.8 1" stroke="#222" stroke-width="1.1" fill="none"/></svg>
<div class="a" style="left:468px;top:299.9px;width:40.5px;height:11.3px;background:#fff"></div>
<div class="a" style="left:468px;top:310.2px;width:40.5px;height:1.2px;background:#b8b8b8"></div>
<div class="a t" style="left:469.9px;top:302.16px;font-size:7.84px;color:#222;transform:scaleX(0.852);">COM4</div>
<svg class="a" style="left:499.8px;top:303.90000000000003px" width="6.8" height="4.8" viewBox="0 0 6.8 4.8"><path d="M1 1 L3.4 3.8 L5.8 1" stroke="#222" stroke-width="1.1" fill="none"/></svg>
<svg class="a" style="left:514.6px;top:301px" width="8.4" height="8.4" viewBox="0 0 10 10"><rect x="0.6" y="0.6" width="8.8" height="8.8" rx="1.2" fill="#fff" stroke="#8a8a8a" stroke-width="1.1"/><path d="M2.2 5.2 L4.2 7.3 L8 2.6" stroke="#111" stroke-width="1.5" fill="none"/></svg>
<div class="a t" style="left:79.7px;top:324.25px;font-size:8.44px;color:#222;transform:scaleX(0.783);">0001</div>
<div class="a t" style="left:101.6px;top:324.25px;font-size:8.44px;color:#222;transform:scaleX(0.775);">Test Data 1</div>
<div class="a" style="left:100.7px;top:334.3px;width:285.5px;height:1.3px;background:#d0d0d0"></div>
<div class="a" style="left:389.5px;top:334.3px;width:31.5px;height:1.5px;background:#c4c4c4"></div>
<div class="a t" style="left:390.9px;top:324.25px;font-size:8.44px;color:#222;transform:scaleX(0.828);">None</div>
<svg class="a" style="left:412.3px;top:325.6px" width="6.8" height="5" viewBox="0 0 6.8 5"><path d="M1 1 L3.4 4 L5.8 1" stroke="#222" stroke-width="1.2" fill="none"/></svg>
<div class="a" style="left:424px;top:334.3px;width:27.3px;height:1.5px;background:#c4c4c4"></div>
<div class="a t" style="left:425.4px;top:324.25px;font-size:8.44px;color:#222;transform:scaleX(0.769);">Text</div>
<svg class="a" style="left:442.5px;top:325.6px" width="6.8" height="5" viewBox="0 0 6.8 5"><path d="M1 1 L3.4 4 L5.8 1" stroke="#222" stroke-width="1.2" fill="none"/></svg>
<div class="a" style="left:454.8px;top:334.3px;width:32.7px;height:1.5px;background:#c4c4c4"></div>
<div class="a t" style="left:456.2px;top:324.25px;font-size:8.44px;color:#222;transform:scaleX(0.730);">COM4</div>
<svg class="a" style="left:478.8px;top:325.6px" width="6.8" height="5" viewBox="0 0 6.8 5"><path d="M1 1 L3.4 4 L5.8 1" stroke="#222" stroke-width="1.2" fill="none"/></svg>
<svg class="a" style="left:491.3px;top:323.7px" width="8.4" height="8.4" viewBox="0 0 10 10"><rect x="0.6" y="0.6" width="8.8" height="8.8" rx="1.2" fill="#fff" stroke="#8a8a8a" stroke-width="1.1"/><path d="M2.2 5.2 L4.2 7.3 L8 2.6" stroke="#111" stroke-width="1.5" fill="none"/></svg>
<div class="a" style="left:503.3px;top:321.5px;width:19.8px;height:13.4px;background:#1f8bff;border-radius:2px;"></div>
<div class="a t" style="left:505px;top:324.25px;font-size:8.44px;color:#fff;font-weight:bold;transform:scaleX(0.800);">Send</div>
<div class="a t" style="left:79.7px;top:342.25px;font-size:8.44px;color:#222;transform:scaleX(0.783);">0002</div>
<div class="a t" style="left:101.6px;top:342.25px;font-size:8.44px;color:#222;transform:scaleX(0.775);">Test Data 2</div>
<div class="a" style="left:100.7px;top:352.3px;width:285.5px;height:1.3px;background:#d0d0d0"></div>
<div class="a" style="left:389.5px;top:352.3px;width:31.5px;height:1.5px;background:#c4c4c4"></div>
<div class="a t" style="left:390.9px;top:342.25px;font-size:8.44px;color:#222;transform:scaleX(0.828);">None</div>
<svg class="a" style="left:412.3px;top:343.6px" width="6.8" height="5" viewBox="0 0 6.8 5"><path d="M1 1 L3.4 4 L5.8 1" stroke="#222" stroke-width="1.2" fill="none"/></svg>
<div class="a" style="left:424px;top:352.3px;width:27.3px;height:1.5px;background:#c4c4c4"></div>
<div class="a t" style="left:425.4px;top:342.25px;font-size:8.44px;color:#222;transform:scaleX(0.769);">Text</div>
<svg class="a" style="left:442.5px;top:343.6px" width="6.8" height="5" viewBox="0 0 6.8 5"><path d="M1 1 L3.4 4 L5.8 1" stroke="#222" stroke-width="1.2" fill="none"/></svg>
<div class="a" style="left:454.8px;top:352.3px;width:32.7px;height:1.5px;background:#c4c4c4"></div>
<div class="a t" style="left:456.2px;top:342.25px;font-size:8.44px;color:#222;transform:scaleX(0.730);">COM1</div>
<svg class="a" style="left:478.8px;top:343.6px" width="6.8" height="5" viewBox="0 0 6.8 5"><path d="M1 1 L3.4 4 L5.8 1" stroke="#222" stroke-width="1.2" fill="none"/></svg>
<svg class="a" style="left:491.3px;top:341.7px" width="8.4" height="8.4" viewBox="0 0 10 10"><rect x="0.6" y="0.6" width="8.8" height="8.8" rx="1.2" fill="#fff" stroke="#8a8a8a" stroke-width="1.1"/><path d="M2.2 5.2 L4.2 7.3 L8 2.6" stroke="#111" stroke-width="1.5" fill="none"/></svg>
<div class="a" style="left:503.3px;top:339.5px;width:19.8px;height:13.4px;background:#1f8bff;border-radius:2px;"></div>
<div class="a t" style="left:505px;top:342.25px;font-size:8.44px;color:#fff;font-weight:bold;transform:scaleX(0.800);">Send</div>
<div class="a t" style="left:79.7px;top:360.25px;font-size:8.44px;color:#222;transform:scaleX(0.783);">0003</div>
<div class="a t" style="left:101.6px;top:360.25px;font-size:8.44px;color:#222;transform:scaleX(0.775);">Test Data 3</div>
<div class="a" style="left:100.7px;top:370.3px;width:285.5px;height:1.3px;background:#d0d0d0"></div>
<div class="a" style="left:389.5px;top:370.3px;width:31.5px;height:1.5px;background:#c4c4c4"></div>
<div class="a t" style="left:390.9px;top:360.25px;font-size:8.44px;color:#222;transform:scaleX(0.828);">None</div>
<svg class="a" style="left:412.3px;top:361.6px" width="6.8" height="5" viewBox="0 0 6.8 5"><path d="M1 1 L3.4 4 L5.8 1" stroke="#222" stroke-width="1.2" fill="none"/></svg>
<div class="a" style="left:424px;top:370.3px;width:27.3px;height:1.5px;background:#c4c4c4"></div>
<div class="a t" style="left:425.4px;top:360.25px;font-size:8.44px;color:#222;transform:scaleX(0.769);">Text</div>
<svg class="a" style="left:442.5px;top:361.6px" width="6.8" height="5" viewBox="0 0 6.8 5"><path d="M1 1 L3.4 4 L5.8 1" stroke="#222" stroke-width="1.2" fill="none"/></svg>
<div class="a" style="left:454.8px;top:370.3px;width:32.7px;height:1.5px;background:#c4c4c4"></div>
<div class="a t" style="left:456.2px;top:360.25px;font-size:8.44px;color:#222;transform:scaleX(0.672);">All</div>
<svg class="a" style="left:478.8px;top:361.6px" width="6.8" height="5" viewBox="0 0 6.8 5"><path d="M1 1 L3.4 4 L5.8 1" stroke="#222" stroke-width="1.2" fill="none"/></svg>
<svg class="a" style="left:491.3px;top:359.7px" width="8.4" height="8.4" viewBox="0 0 10 10"><rect x="0.6" y="0.6" width="8.8" height="8.8" rx="1.2" fill="#fff" stroke="#8a8a8a" stroke-width="1.1"/><path d="M2.2 5.2 L4.2 7.3 L8 2.6" stroke="#111" stroke-width="1.5" fill="none"/></svg>
<div class="a" style="left:503.3px;top:357.5px;width:19.8px;height:13.4px;background:#1f8bff;border-radius:2px;"></div>
<div class="a t" style="left:505px;top:360.25px;font-size:8.44px;color:#fff;font-weight:bold;transform:scaleX(0.800);">Send</div>
<div class="a" style="left:74.5px;top:388.3px;width:451px;height:10px;background:#f6ebec"></div>
<div class="a" style="left:91.7px;top:391px;width:422.8px;height:5px;background:#a8d8e6;box-shadow:inset 0 0 0 0.6px #98c6d2"></div>
<div class="a" style="left:270.4px;top:228px;width:48.6px;height:132px;background:#3f3f3f;box-shadow:1px 1px 2px rgba(0,0,0,.35)"></div>
<div class="a" style="left:272px;top:230.4px;width:45px;height:11.6px;background:#4f4f4f"></div>
<div class="a t" style="left:273.9px;top:233.26px;font-size:8.14px;color:#f4f4f4;transform:scaleX(0.797);">Text</div>
<div class="a t" style="left:273.9px;top:244.76px;font-size:8.14px;color:#f4f4f4;transform:scaleX(0.801);">Text , Hex</div>
<div class="a t" style="left:273.9px;top:256.26px;font-size:8.14px;color:#f4f4f4;transform:scaleX(0.816);">Text , Decimal</div>
<div class="a t" style="left:273.9px;top:267.76px;font-size:8.14px;color:#f4f4f4;transform:scaleX(0.813);">Text , Octal</div>
<div class="a t" style="left:273.9px;top:279.26px;font-size:8.14px;color:#f4f4f4;transform:scaleX(0.806);">Text , Binary</div>
<div class="a t" style="left:273.9px;top:290.76px;font-size:8.14px;color:#f4f4f4;transform:scaleX(0.788);">Text , ASCII</div>
<div class="a t" style="left:273.9px;top:302.26px;font-size:8.14px;color:#f4f4f4;transform:scaleX(0.809);">Text , Dots</div>
<div class="a t" style="left:273.9px;top:313.76px;font-size:8.14px;color:#f4f4f4;transform:scaleX(0.808);">Hex</div>
<div class="a t" style="left:273.9px;top:325.26px;font-size:8.14px;color:#f4f4f4;transform:scaleX(0.820);">Decimal</div>
<div class="a t" style="left:273.9px;top:336.76px;font-size:8.14px;color:#f4f4f4;transform:scaleX(0.848);">Octal</div>
<div class="a t" style="left:273.9px;top:348.26px;font-size:8.14px;color:#f4f4f4;transform:scaleX(0.802);">Binary</div>
</body></html>
